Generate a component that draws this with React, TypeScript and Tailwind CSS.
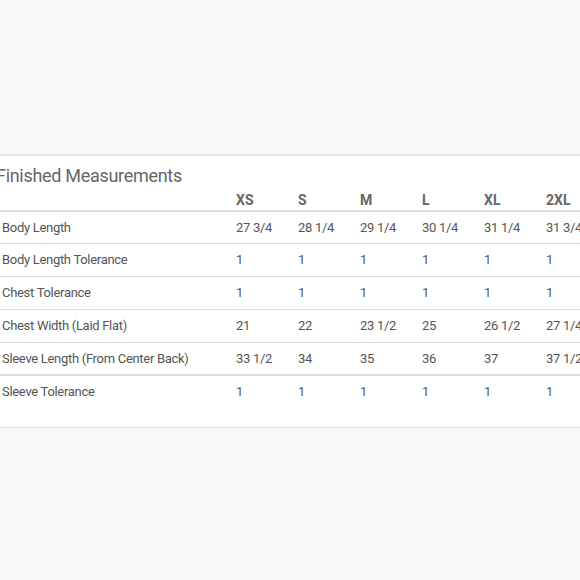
import React from 'react';

const sizes = ['XS', 'S', 'M', 'L', 'XL', '2XL'];

const rows: { label: string; values: string[]; thick?: boolean }[] = [
  { label: 'Body Length', values: ['27 3/4', '28 1/4', '29 1/4', '30 1/4', '31 1/4', '31 3/4'] },
  { label: 'Body Length Tolerance', values: ['1', '1', '1', '1', '1', '1'] },
  { label: 'Chest Tolerance', values: ['1', '1', '1', '1', '1', '1'] },
  { label: 'Chest Width (Laid Flat)', values: ['21', '22', '23 1/2', '25', '26 1/2', '27 1/4'] },
  { label: 'Sleeve Length (From Center Back)', values: ['33 1/2', '34', '35', '36', '37', '37 1/2'], thick: true },
  { label: 'Sleeve Tolerance', values: ['1', '1', '1', '1', '1', '1'] },
];

export default function App() {
  return (
    <div
      className="w-[580px] h-[580px] bg-[#f8f8f8] overflow-hidden flex flex-col"
      style={{ fontFamily: 'Roboto, "Noto Sans", sans-serif' }}
    >
      <div className="h-[154px] shrink-0" />
      <div className="bg-white border-t-2 border-b border-[#e6e6e6] border-b-[#e0e0e0] h-[274px] overflow-hidden shrink-0">
        <div className="-ml-[4px] w-[606px]">
          <h2 className="text-[18px] leading-[22px] text-[#666] tracking-[-0.3px] pt-[9px]">Finished Measurements</h2>
          <table className="table-fixed border-collapse w-[606px] text-[13px] text-[#555] tracking-[-0.3px]">
            <colgroup>
              <col className="w-[234px]" />
              {sizes.map((s) => (
                <col key={s} className="w-[62px]" />
              ))}
            </colgroup>
            <thead>
              <tr className="border-b-2 border-[#dcdcdc]">
                <th className="h-[23px] p-0" />
                {sizes.map((s) => (
                  <th key={s} className="pl-[6px] pt-[4px] pb-0 text-left text-[14px] leading-[19px] font-bold text-[#666] tracking-normal align-middle">
                    {s}
                  </th>
                ))}
              </tr>
            </thead>
            <tbody>
              {rows.map((r, i) => (
                <tr
                  key={r.label}
                  className={
                    i === rows.length - 1
                      ? ''
                      : r.thick
                      ? 'border-b-2 border-[#dcdcdc]'
                      : 'border-b border-[#dcdcdc]'
                  }
                >
                  <td className={`pl-[6px] align-middle whitespace-nowrap ${i === 0 ? 'h-[32px]' : 'h-[33px]'}`}>{r.label}</td>
                  {r.values.map((v, j) => (
                    <td key={j} className="pl-[6px] align-middle whitespace-nowrap">
                      {v}
                    </td>
                  ))}
                </tr>
              ))}
            </tbody>
          </table>
        </div>
      </div>
    </div>
  );
}
